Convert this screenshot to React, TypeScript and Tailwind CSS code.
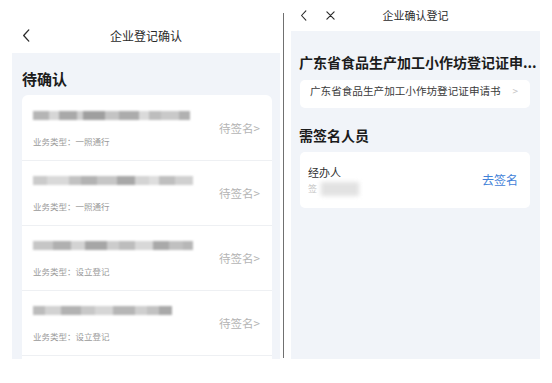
import React from "react";

const FONT = { fontFamily: '"Noto Sans CJK SC", "Noto Sans", sans-serif' };

type Blur = { widths: number[]; shades: string[] };

const pendingItems: { blur: Blur; kind: string }[] = [
  {
    blur: { widths: [16, 10, 18, 6, 22, 14, 20, 10, 12, 18, 11], shades: ["bg-[#b5b5b5]", "bg-[#d6d6d6]", "bg-[#a9a9a9]", "bg-[#cfcfcf]", "bg-[#9f9f9f]", "bg-[#c4c4c4]", "bg-[#acacac]", "bg-[#dadada]", "bg-[#bdbdbd]", "bg-[#c9c9c9]", "bg-[#b1b1b1]"] },
    kind: "一照通行"
  },
  {
    blur: { widths: [14, 22, 12, 16, 20, 18, 14, 10, 16, 18], shades: ["bg-[#cbcbcb]", "bg-[#d9d9d9]", "bg-[#c2c2c2]", "bg-[#b3b3b3]", "bg-[#c6c6c6]", "bg-[#a8a8a8]", "bg-[#d4d4d4]", "bg-[#dedede]", "bg-[#bfbfbf]", "bg-[#d0d0d0]"] },
    kind: "一照通行"
  },
  {
    blur: { widths: [20, 18, 14, 22, 12, 16, 18, 16, 14, 10], shades: ["bg-[#c6c6c6]", "bg-[#b0b0b0]", "bg-[#d3d3d3]", "bg-[#a6a6a6]", "bg-[#cccccc]", "bg-[#bdbdbd]", "bg-[#d8d8d8]", "bg-[#a9a9a9]", "bg-[#c0c0c0]", "bg-[#b7b7b7]"] },
    kind: "设立登记"
  },
  {
    blur: { widths: [12, 16, 20, 14, 18, 22, 12, 12, 13], shades: ["bg-[#bcbcbc]", "bg-[#d2d2d2]", "bg-[#b2b2b2]", "bg-[#c8c8c8]", "bg-[#d6d6d6]", "bg-[#b6b6b6]", "bg-[#cfcfcf]", "bg-[#c2c2c2]", "bg-[#a9a9a9]"] },
    kind: "设立登记"
  }
];

function ChevronLeft({ className }: { className?: string }) {
  return (
    <svg viewBox="0 0 8 14" className={className} fill="none">
      <polyline points="7,1 1.5,7 7,13" stroke="#2b2b2b" strokeWidth="1.4" strokeLinecap="round" strokeLinejoin="round" />
    </svg>
  );
}

function BlurredTitle({ blur }: { blur: Blur }) {
  return (
    <div className="flex h-[12px] items-center blur-[1.2px]">
      {blur.widths.map((w, i) => (
        <span key={i} className={`h-[9px] ${blur.shades[i]}`} style={{ width: w }} />
      ))}
    </div>
  );
}

function PendingRow({ blur, kind }: { blur: Blur; kind: string }) {
  return (
    <div className="flex items-center justify-between border-b border-[#eef0f3] pt-[13px] pb-[13px] pr-[12px] pl-[11px]">
      <div>
        <BlurredTitle blur={blur} />
        <div className="mt-[14px] text-[8.5px] leading-[12px] text-[#9a9a9a]">业务类型：{kind}</div>
      </div>
      <div className="text-[11.5px] leading-[14px] text-[#b4b4b4]">待签名&gt;</div>
    </div>
  );
}

export default function App() {
  return (
    <div className="flex h-[383px] w-[552px] overflow-hidden bg-white text-[#1f1f1f]" style={FONT}>
      <section className="flex w-[283px] flex-col">
        <header className="ml-[12px] grid h-[53px] w-[268px] grid-cols-[1fr_auto_1fr] items-center pt-[18px]">
          <div className="pl-[10px]">
            <ChevronLeft className="h-[13px] w-[8px]" />
          </div>
          <div className="text-[12px] text-[#2a2a2a]">企业登记确认</div>
          <div />
        </header>
        <div className="ml-[12px] h-[306px] w-[268px] overflow-hidden bg-[#f1f4f9]">
          <h2 className="pt-[16px] pl-[10px] text-[15px] font-bold leading-[20px] text-[#1c1c1c]">待确认</h2>
          <div className="mt-[6px] ml-[10px] mr-[8px] rounded-t-[6px] bg-white pt-px pb-[20px]">
            {pendingItems.map((item, i) => (
              <PendingRow key={i} blur={item.blur} kind={item.kind} />
            ))}
          </div>
        </div>
      </section>

      <div className="mt-[13px] h-[345px] w-px bg-[#707070]" />

      <section className="flex flex-1 flex-col">
        <header className="ml-[7px] grid h-[31px] w-[249px] grid-cols-[1fr_auto_1fr] items-center">
          <div className="flex items-center gap-[19px] pl-[9px]">
            <ChevronLeft className="h-[11px] w-[7px]" />
            <svg viewBox="0 0 10 10" className="h-[9px] w-[9px]" fill="none">
              <path d="M1 1L9 9M9 1L1 9" stroke="#2b2b2b" strokeWidth="1.3" strokeLinecap="round" />
            </svg>
          </div>
          <div className="text-[11px] text-[#2a2a2a]">企业确认登记</div>
          <div />
        </header>
        <div className="ml-[7px] h-[328px] w-[249px] overflow-hidden bg-[#f1f4f9]">
          <h2 className="whitespace-nowrap pt-[21px] pl-[8px] text-[14px] font-bold leading-[20px] text-[#1c1c1c]">
            广东省食品生产加工小作坊登记证申...
          </h2>
          <div className="mt-[8px] ml-[9px] mr-[10px] flex h-[28px] items-start justify-between rounded-[5px] bg-white pt-[4px] pl-[10px] pr-[12px]">
            <span className="text-[10.6px] leading-[14px] text-[#3a3a3a]">广东省食品生产加工小作坊登记证申请书</span>
            <span className="text-[10px] leading-[14px] text-[#c4c4c4]">&gt;</span>
          </div>
          <h2 className="mt-[17px] pl-[8px] text-[14px] font-bold leading-[20px] text-[#1c1c1c]">需签名人员</h2>
          <div className="mt-[7px] ml-[9px] mr-[10px] flex h-[56px] items-center justify-between rounded-[5px] bg-white pl-[8px] pr-[12px]">
            <div>
              <div className="text-[11px] leading-[14px] text-[#2f2f2f]">经办人</div>
              <div className="mt-[3px] flex items-center">
                <span className="text-[9px] leading-[12px] text-[#c6c6c6]">签</span>
                <span className="ml-[4px] h-[14px] w-[38px] bg-[#e2e2e2] blur-[2px]" />
              </div>
            </div>
            <span className="text-[12px] text-[#4281d8]">去签名</span>
          </div>
        </div>
      </section>
    </div>
  );
}
